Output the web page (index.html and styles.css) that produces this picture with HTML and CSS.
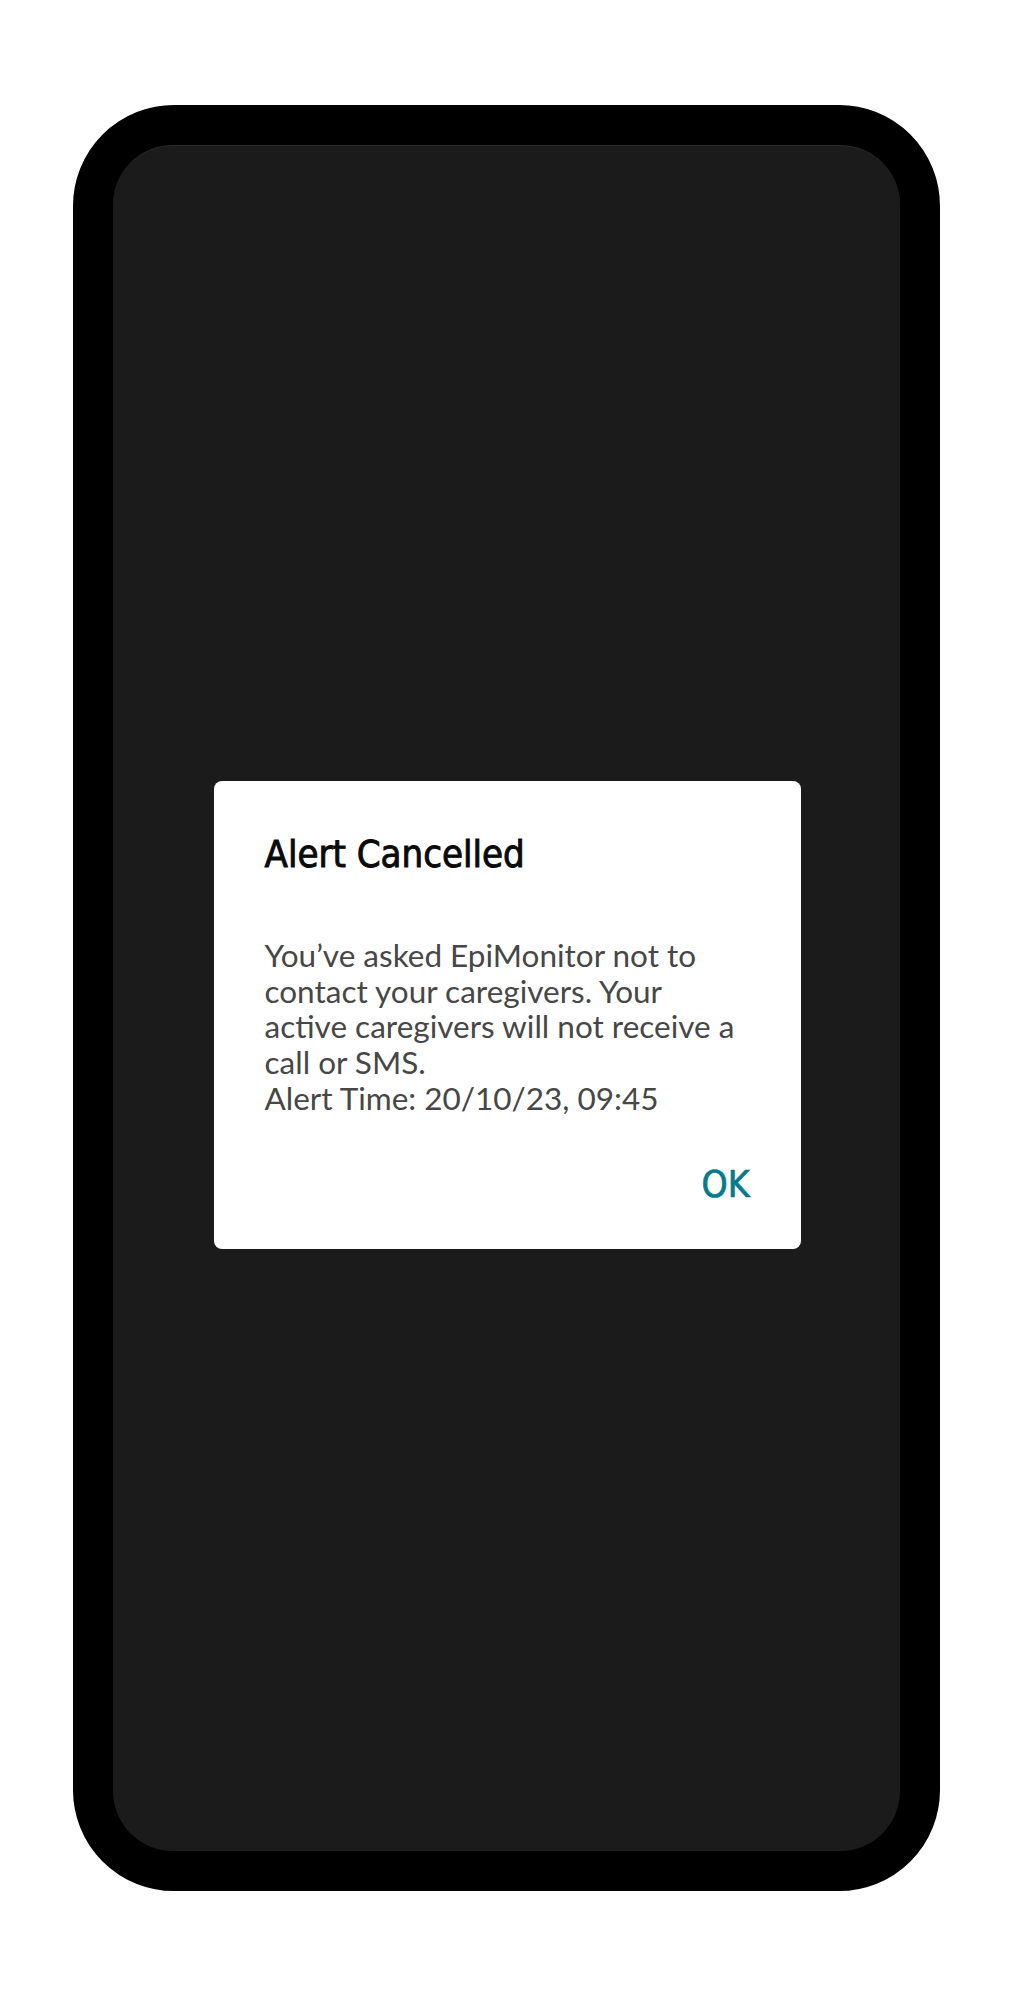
FILE: index.html
```html
<!DOCTYPE html>
<html lang="en">
<head>
<meta charset="utf-8">
<title>Alert Cancelled</title>
<link rel="stylesheet" href="styles.css">
</head>
<body>
<div class="page">
  <div class="phone">
    <div class="screen">
      <div class="dialog" role="alertdialog" aria-labelledby="dlg-title">
        <h1 class="dialog-title" id="dlg-title">Alert Cancelled</h1>
        <p class="dialog-body">You’ve asked EpiMonitor not to<br>contact your caregivers. Your<br>active caregivers will not receive a<br>call or SMS.<br>Alert Time: 20/10/23, 09:45</p>
        <div class="dialog-actions">
          <button class="dialog-btn" type="button">OK</button>
        </div>
      </div>
    </div>
  </div>
</div>
</body>
</html>
```

FILE: styles.css
```css
html, body {
  margin: 0;
  padding: 0;
  background: #ffffff;
}

.page {
  padding-top: 105px;
  padding-bottom: 109px;
}

.phone {
  box-sizing: border-box;
  width: 867px;
  height: 1786px;
  margin: 0 auto;
  background: #000000;
  border: 40px solid #000000;
  border-radius: 101px;
}

.screen {
  box-sizing: border-box;
  height: 100%;
  background: #1b1b1b;
  border-radius: 60px;
  padding-top: 635px;
  padding-left: 2px;
  border-top: 1px solid #2a2a2a;
}

.dialog {
  box-sizing: border-box;
  width: 587px;
  margin: 0 auto;
  background: #ffffff;
  border-radius: 8px;
  padding: 50px 51px 41px 51px;
}

.dialog-title {
  margin: 0;
  font-family: "DejaVu Sans Condensed", "DejaVu Sans", sans-serif;
  font-stretch: condensed;
  font-weight: normal;
  font-size: 38px;
  line-height: 46px;
  color: #0a0a0a;
  -webkit-text-stroke: 0.9px #0a0a0a;
}

.dialog-body {
  margin: 61px 0 0 0;
  font-family: "Lato", "Liberation Sans", sans-serif;
  font-size: 31.5px;
  line-height: 35.7px;
  color: #474747;
}

.dialog-actions {
  display: flex;
  justify-content: flex-end;
  margin-top: 45px;
}

.dialog-btn {
  margin: 0;
  padding: 0;
  border: 0;
  background: none;
  font-family: "DejaVu Sans Condensed", "DejaVu Sans", sans-serif;
  font-stretch: condensed;
  font-size: 37px;
  line-height: 46px;
  color: #047b8b;
  -webkit-text-stroke: 0.7px #047b8b;
  cursor: pointer;
}
```
